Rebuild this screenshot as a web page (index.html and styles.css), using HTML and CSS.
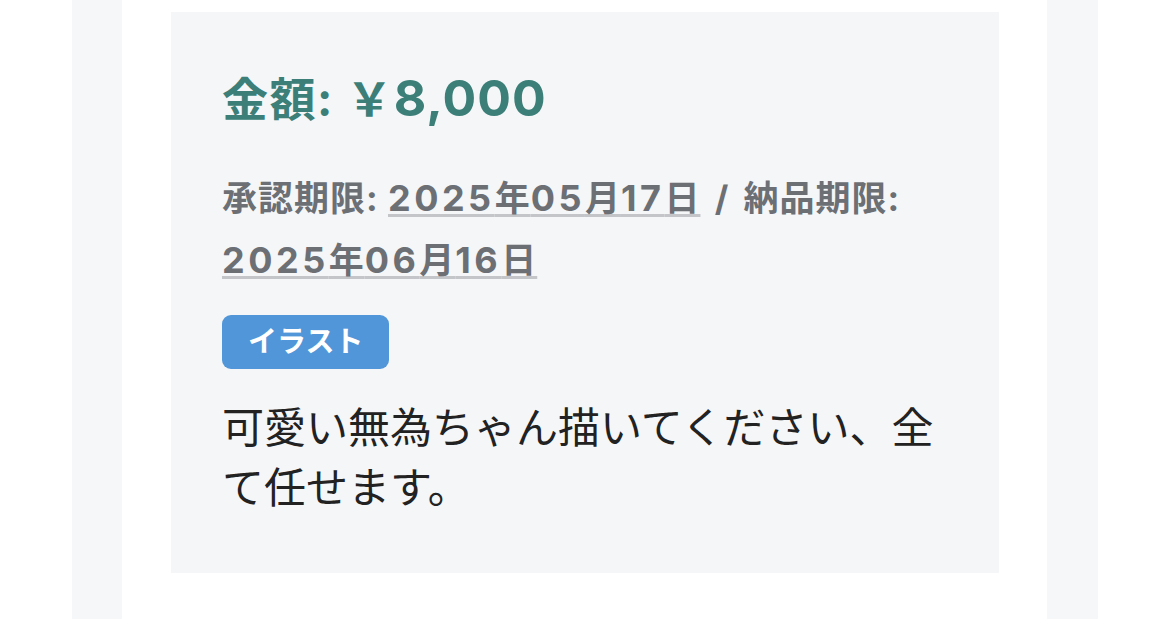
FILE: index.html
```html
<!DOCTYPE html>
<html lang="ja">
<head>
<meta charset="utf-8">
<title>依頼詳細</title>
<link rel="stylesheet" href="styles.css">
</head>
<body>
<div class="outer">
  <div class="inner">
    <div class="card">
      <h2 class="amount">金額: <span class="yen">￥</span><span class="num">8,000</span></h2>
      <p class="dates">承認期限: <span class="date"><span class="n">2025</span>年<span class="n">05</span>月<span class="n">17</span>日</span><span class="sep"> / </span>納品期限: <span class="date"><span class="n">2025</span>年<span class="n">06</span>月<span class="n">16</span>日</span></p>
      <div class="tags"><span class="tag">イラスト</span></div>
      <p class="desc">可愛い無為ちゃん描いてください、全て任せます。</p>
    </div>
  </div>
</div>
</body>
</html>
```

FILE: styles.css
```css
html, body {
  margin: 0;
  padding: 0;
  background: #ffffff;
}
body {
  font-family: "Inter", "Noto Sans CJK JP", sans-serif;
}
.outer {
  margin: 0 72px;
  min-height: 619px;
  background: #f6f7f9;
  padding: 0 51px 0 50px;
}
.inner {
  background: #ffffff;
  min-height: 619px;
  padding: 12px 48px 0 49px;
  box-sizing: border-box;
}
.card {
  background: #f5f6f8;
  padding: 54px 51px 55px 51px;
}
.amount {
  margin: 0;
  font-size: 46px;
  line-height: 60px;
  font-weight: 700;
  color: #3b7f78;
  letter-spacing: 1.5px;
}
.amount .yen {
  font-family: "Noto Sans CJK JP", sans-serif;
}
.amount .num {
  font-size: 50px;
  letter-spacing: 1px;
}
.dates {
  margin: 38px 0 0 0;
  font-size: 35px;
  line-height: 62px;
  font-weight: 700;
  color: #6c6f74;
  letter-spacing: 1px;
}
.sep {
  word-spacing: 5px;
}
.date {
  white-space: nowrap;
  text-decoration: underline;
  text-decoration-color: #c3c5c9;
  text-decoration-thickness: 3px;
  text-underline-offset: 3px;
}
.date .n {
  font-size: 36px;
  letter-spacing: 3.5px;
}
.tags {
  margin-top: 24px;
  display: flex;
}
.tag {
  display: inline-block;
  height: 54px;
  line-height: 54px;
  padding: 0 26px;
  border-radius: 9px;
  background: #5096d8;
  color: #ffffff;
  font-size: 29px;
  font-weight: 700;
  letter-spacing: 0;
}
.desc {
  margin: 29px 0 0 0;
  font-size: 42px;
  line-height: 60px;
  font-weight: 400;
  color: #222222;
}
```
